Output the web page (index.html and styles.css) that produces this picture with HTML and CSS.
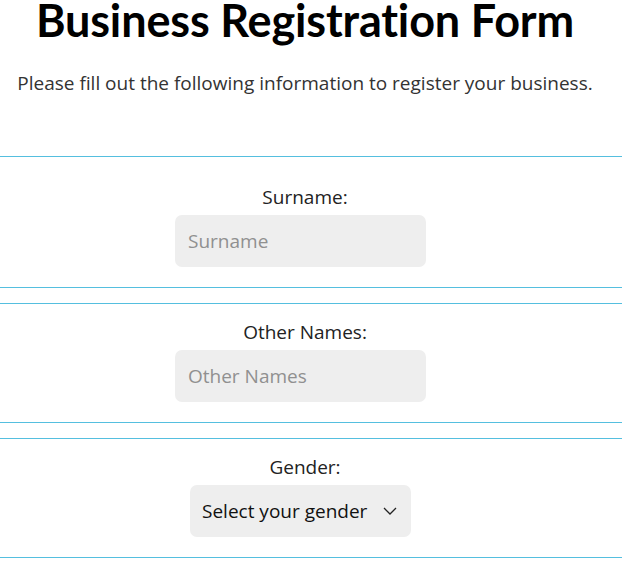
FILE: index.html
```html
<!DOCTYPE html>
<html lang="en">
<head>
<meta charset="utf-8">
<title>Business Registration Form</title>
<link rel="stylesheet" href="styles.css">
</head>
<body>
<div class="page">
  <h1 class="title">Business Registration Form</h1>
  <p class="intro">Please fill out the following information to register your business.</p>
  <form class="form">
    <div class="field field-first">
      <label class="label" for="surname">Surname:</label>
      <input class="input" id="surname" type="text" placeholder="Surname">
    </div>
    <div class="field">
      <label class="label" for="other">Other Names:</label>
      <input class="input" id="other" type="text" placeholder="Other Names">
    </div>
    <div class="field">
      <label class="label" for="gender">Gender:</label>
      <div class="select">
        <span class="select-text">Select your gender</span>
        <svg class="chev" width="14" height="8" viewBox="0 0 14 8"><path d="M1 1 L7 7 L13 1" fill="none" stroke="#222" stroke-width="1.3"/></svg>
      </div>
    </div>
  </form>
</div>
</body>
</html>
```
FILE: styles.css
```css
* { box-sizing: border-box; }
html, body { margin: 0; padding: 0; background: #fff; }
body { font-family: "Open Sans", "Noto Sans", sans-serif; color: #222; }
.page { width: 622px; }
.title {
  margin: 0;
  width: 610px;
  font-family: Lato, "Open Sans", sans-serif;
  font-size: 45px;
  line-height: 41px;
  letter-spacing: -0.15px;
  font-variant-ligatures: none;
  font-weight: 700;
  text-align: center;
  color: #000;
}
.intro {
  width: 610px;
  margin: 30px 0 0;
  font-size: 19px;
  line-height: 24px;
  text-align: center;
  color: #333;
}
.form { margin-top: 61px; width: 622px; display: flex; flex-direction: column; gap: 15px; }
.field {
  border-top: 1px solid #55bfdf;
  border-bottom: 1px solid #55bfdf;
  display: flex;
  flex-direction: column;
  align-items: center;
  padding: 16px 21px 20px 0;
  width: 622px;
}
.field-first { padding-top: 28px; }
.label { font-size: 19px; line-height: 24px; color: #222; margin-left: 9px; margin-bottom: 6px; }
.input {
  width: 251px; height: 52px;
  border: none; border-radius: 7px;
  background: #eee;
  font: inherit; font-size: 19px;
  padding: 0 13px;
  color: #222;
  outline: none;
}
.input::placeholder { color: #909090; }
.select {
  width: 221px; height: 52px;
  border-radius: 7px;
  background: #eee;
  display: flex; align-items: center; justify-content: space-between;
  padding: 0 14px 0 12px;
  font-size: 19px;
  color: #111;
}
.chev { display: block; }
```
